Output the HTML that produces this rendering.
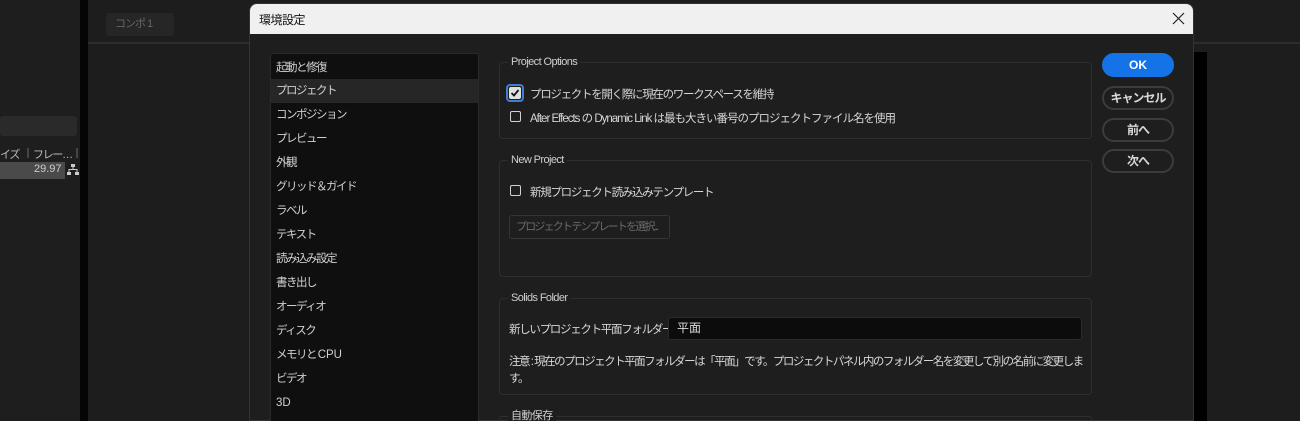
<!DOCTYPE html>
<html style="overflow:hidden;height:421px"><head><meta charset="utf-8"><style>
*{margin:0;padding:0;box-sizing:border-box}
body{width:1300px;height:421px;overflow:hidden;background:#1d1d1d;font-family:"Liberation Sans","Noto Sans CJK JP",sans-serif;position:relative;color:#d6d6d6;font-size:12px}
.a{position:absolute}
.li{position:absolute;left:0;width:208px;height:24px;line-height:24px;padding-left:5px;font-size:11.5px;letter-spacing:-1.5px;color:#d0d0d0}
.grp{position:absolute;left:499px;width:593px;border:1px solid #2e2e2e;border-radius:4px}
.gt{position:absolute;top:-9px;left:8px;background:#1e1e1e;padding:0 3px;font-size:11px;letter-spacing:-0.6px;color:#cfcfcf;line-height:16px}
.cb{position:absolute;width:11px;height:11px;border:1.5px solid #d0d0d0;border-radius:2px}
.btn{position:absolute;left:1102px;width:72px;height:24px;border:2px solid #3c3c3c;border-radius:12px;text-align:center;line-height:20px;font-size:12px;letter-spacing:-1px;color:#d8d8d8;font-weight:bold}
.t{position:absolute;font-size:11.5px;letter-spacing:-1.3px;color:#d6d6d6;white-space:nowrap}
</style></head><body>
<div class="a" style="left:0;top:0;width:80px;height:421px;background:#1e1e1e"></div>
<div class="a" style="left:80px;top:0;width:8px;height:421px;background:#050505"></div>
<div class="a" style="left:0;top:116px;width:77px;height:20px;background:#2a2a2a;border-radius:3px"></div>
<div class="t" style="left:0;top:146px;font-size:11px;color:#bbb">イズ</div>
<div class="a" style="left:27px;top:148px;width:2px;height:10px;background:#444"></div>
<div class="t" style="left:33px;top:146px;font-size:11px;color:#bbb">フレー…</div>
<div class="a" style="left:76px;top:148px;width:2px;height:10px;background:#444"></div>
<div class="a" style="left:0;top:162px;width:65px;height:17px;background:#4a4a4a"></div>
<div class="t" style="left:34px;top:163px;font-size:11px;letter-spacing:0;color:#ccc">29.97</div>
<svg class="a" style="left:67px;top:164px" width="12" height="12" viewBox="0 0 12 12" fill="#ccc"><rect x="4" y="0" width="4" height="3"/><rect x="5.5" y="3" width="1" height="3"/><rect x="1.5" y="5" width="9" height="1"/><rect x="1.5" y="5" width="1" height="3"/><rect x="9.5" y="5" width="1" height="3"/><rect x="0" y="8" width="4" height="3"/><rect x="8" y="8" width="4" height="3"/></svg>
<div class="a" style="left:88px;top:42px;width:1212px;height:2px;background:#2c2c2c"></div>
<div class="a" style="left:106px;top:13px;width:68px;height:23px;background:#262626;border-radius:3px;color:#666;font-size:11px;line-height:23px;padding-left:9px;letter-spacing:-1px">コンポ 1</div>
<div class="a" style="left:1194px;top:52px;width:13px;height:369px;background:#000"></div>
<div class="a" style="left:249px;top:3px;width:945px;height:418px;background:#1e1e1e;border-radius:8px 8px 0 0;overflow:hidden;border:1px solid #333">
 <div class="a" style="left:0;top:0;width:945px;height:30px;background:#f0f0f0"></div>
 <div class="t" style="left:9px;top:7px;color:#111;font-size:12px;letter-spacing:-0.5px">環境設定</div>
 <svg class="a" style="left:922px;top:8px" width="13" height="13" viewBox="0 0 13 13" stroke="#222" stroke-width="1.2"><path d="M1 1L12 12M12 1L1 12"/></svg>
</div>
<div class="a" style="left:270px;top:53px;width:209px;height:368px;background:#0f0f0f;border:1px solid #2a2a2a;border-bottom:none;border-radius:3px 3px 0 0;overflow:hidden">
 <div class="li" style="top:2px">起動と修復</div>
 <div class="li" style="top:25px;background:#262626">プロジェクト</div>
 <div class="li" style="top:49px">コンポジション</div>
 <div class="li" style="top:73px">プレビュー</div>
 <div class="li" style="top:97px">外観</div>
 <div class="li" style="top:121px">グリッド＆ガイド</div>
 <div class="li" style="top:145px">ラベル</div>
 <div class="li" style="top:169px">テキスト</div>
 <div class="li" style="top:193px">読み込み設定</div>
 <div class="li" style="top:217px">書き出し</div>
 <div class="li" style="top:241px">オーディオ</div>
 <div class="li" style="top:265px">ディスク</div>
 <div class="li" style="top:289px">メモリと <span style="letter-spacing:0">CPU</span></div>
 <div class="li" style="top:313px">ビデオ</div>
 <div class="li" style="top:337px;letter-spacing:0">3D</div>
</div>
<div class="grp" style="top:62px;height:77px"><div class="gt">Project Options</div></div>
<div class="a" style="left:506px;top:84px;width:18px;height:18px;border:2px solid #3f7fd0;border-radius:4px"></div>
<div class="a" style="left:509px;top:87px;width:12px;height:12px;background:#e0e0e0;border-radius:2px"></div>
<svg class="a" style="left:510px;top:88px" width="10" height="10" viewBox="0 0 10 10"><path d="M1.5 5L4 7.5L8.5 2" stroke="#111" stroke-width="1.8" fill="none"/></svg>
<div class="t" style="left:530px;top:86px">プロジェクトを開く際に現在のワークスペースを維持</div>
<div class="cb" style="left:510px;top:111px"></div>
<div class="t" style="left:530px;top:110px;letter-spacing:-1px">After Effects の Dynamic Link は最も大きい番号のプロジェクトファイル名を使用</div>
<div class="grp" style="top:160px;height:117px"><div class="gt">New Project</div></div>
<div class="cb" style="left:510px;top:185px"></div>
<div class="t" style="left:530px;top:184px">新規プロジェクト読み込みテンプレート</div>
<div class="a" style="left:509px;top:215px;width:161px;height:24px;border:1px solid #353535;border-radius:3px;color:#6a6a6a;font-size:11px;letter-spacing:-1.8px;line-height:22px;padding-left:6px;white-space:nowrap;overflow:hidden">プロジェクトテンプレートを選択...</div>
<div class="grp" style="top:298px;height:97px"><div class="gt">Solids Folder</div></div>
<div class="t" style="left:509px;top:321px">新しいプロジェクト平面フォルダー</div>
<div class="a" style="left:668px;top:317px;width:414px;height:23px;background:#0c0c0c;border:1px solid #2a2a2a;border-radius:3px;color:#ddd;line-height:21px;padding-left:8px">平面</div>
<div class="t" style="left:509px;top:353px;letter-spacing:-1.5px">注意 : 現在のプロジェクト平面フォルダーは「平面」です。プロジェクトパネル内のフォルダー名を変更して別の名前に変更しま</div>
<div class="t" style="left:509px;top:370px">す。</div>
<div class="grp" style="top:416px;height:5px;border-bottom:none"><div class="gt">自動保存</div></div>
<div class="btn" style="top:53px;background:#1473e6;border-color:#1473e6;color:#fff;letter-spacing:0">OK</div>
<div class="btn" style="top:86px">キャンセル</div>
<div class="btn" style="top:118px">前へ</div>
<div class="btn" style="top:149px">次へ</div>
</body></html>
